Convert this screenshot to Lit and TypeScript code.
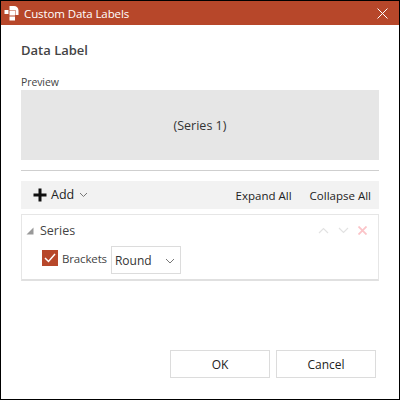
import { LitElement, html, css } from "lit";
import { customElement } from "lit/decorators.js";

@customElement("app-root")
export class AppRoot extends LitElement {
  static styles = css`
    :host { display: block; width: 400px; height: 400px; box-sizing: border-box; border: 1px solid #000; background: #fff; font-family: "Open Sans", "Noto Sans", sans-serif; font-size: 12px; color: #333; overflow: hidden; }
    .win { display: flex; flex-direction: column; height: 100%; }
    .title { height: 24px; flex: none; background: #b7472a; color: #fff; display: flex; align-items: center; padding: 0 11px 0 3px; gap: 4px; font-size: 11.5px; }
    .title .t { flex: 1; letter-spacing: -0.1px; }
    .title svg { display: block; }
    .body { flex: 1; display: flex; flex-direction: column; padding: 0 20px 21px; }
    h1 { margin: 16px 0 0; font-size: 13px; line-height: 18px; font-weight: 600; color: #444; }
    .plabel { margin-top: 16px; font-size: 10.5px; line-height: 14px; color: #444; letter-spacing: -0.1px; }
    .preview { margin-top: 1px; height: 70px; background: #e6e6e6; display: flex; align-items: center; justify-content: center; font-size: 12.5px; color: #333; flex: none; }
    .sep { margin-top: 10px; height: 1px; background: #cfcfcf; flex: none; }
    .toolbar { margin-top: 10px; height: 28px; background: #f2f2f2; display: flex; align-items: center; padding: 0 8px 0 12px; color: #222; font-size: 11.5px; flex: none; }
    .add { display: flex; align-items: center; gap: 4px; flex: 1; }
    .add .lbl { color: #222; font-size: 12.5px; margin-right: 1px; margin-top: -1px; }
    .links { display: flex; gap: 18px; }
    .panel { margin-top: 5px; height: 67px; box-sizing: border-box; border: 1px solid #e6e6e6; border-bottom: 2px solid #e0e0e0; flex: none; display: flex; flex-direction: column; padding: 0 0 0 4px; }
    .head { display: flex; align-items: center; height: 31px; gap: 6px; padding-right: 11px; font-size: 12.5px; color: #444; }
    .head .name { flex: 1; }
    .acts { display: flex; align-items: center; gap: 9px; }
    .row { display: flex; align-items: center; padding-left: 16px; gap: 4px; }
    .check { width: 16px; height: 16px; background: #b7472a; display: flex; align-items: center; justify-content: center; flex: none; margin-top: -5px; }
    .rlabel { font-size: 11.5px; color: #444; letter-spacing: -0.15px; margin-top: -3px; }
    .select { width: 70px; height: 28px; box-sizing: border-box; border: 1px solid #dcdcdc; display: flex; align-items: center; justify-content: space-between; padding: 1px 5px 0 3px; font-size: 12px; color: #333; }
    .foot { margin-top: auto; display: flex; justify-content: flex-end; gap: 6px; padding-right: 3px; }
    .btn { width: 100px; height: 28px; box-sizing: border-box; border: 1px solid #dcdcdc; background: #fff; display: flex; align-items: center; justify-content: center; color: #222; font-size: 12px; }
    .btn.ok { font-weight: 500; }
  `;

  render() {
    return html`<div class="win">
      <div class="title">
        <svg width="16" height="16" viewBox="0 0 16 16" fill="#fff"><path d="M5.500 1H10A4.500 4.500 0 0 1 14.500 5.500V10H11.500V5H5.500z"/><rect x="0.500" y="5" width="4" height="4"/><rect x="5.500" y="5.500" width="5.500" height="5"/><rect x="5.500" y="11.500" width="5.500" height="4"/></svg>
        <span class="t">Custom Data Labels</span>
        <svg width="11" height="11" viewBox="0 0 11 11" stroke="#fff" stroke-width="1" fill="none"><path d="M.5.5l10 10M10.500.5l-10 10"/></svg>
      </div>
      <div class="body">
        <h1>Data Label</h1>
        <div class="plabel">Preview</div>
        <div class="preview">(Series 1)</div>
        <div class="sep"></div>
        <div class="toolbar">
          <div class="add">
            <svg width="14" height="14" viewBox="0 0 14 14" fill="#111"><path d="M5.500.5h3v5h5v3h-5v5h-3v-5H.5v-3h5z"/></svg>
            <span class="lbl">Add</span>
            <svg width="9" height="6" viewBox="0 0 9 6" fill="none" stroke="#777"><path d="M1 1l3.500 3.500L8 1"/></svg>
          </div>
          <div class="links"><span>Expand All</span><span>Collapse All</span></div>
        </div>
        <div class="panel">
          <div class="head">
            <svg width="8" height="8" viewBox="0 0 8 8" fill="#999"><path d="M7.500.5v7H.5z"/></svg>
            <span class="name">Series</span>
            <div class="acts">
              <svg width="11" height="7" viewBox="0 0 11 7" fill="none" stroke="#e2e2e2" stroke-width="1.200"><path d="M1 6l4.500-4.500L10 6"/></svg>
              <svg width="11" height="7" viewBox="0 0 11 7" fill="none" stroke="#e2e2e2" stroke-width="1.200"><path d="M1 1l4.500 4.500L10 1"/></svg>
              <svg width="9" height="9" viewBox="0 0 9 9" fill="none" stroke="#fbc4c8" stroke-width="1.800"><path d="M.5.5l8 8M8.500.5l-8 8"/></svg>
            </div>
          </div>
          <div class="row">
            <span class="check"><svg width="12" height="10" viewBox="0 0 12 10" fill="none" stroke="#fff" stroke-width="1.500"><path d="M1 5l3.500 3.500L11 1"/></svg></span>
            <span class="rlabel">Brackets</span>
            <div class="select"><span>Round</span><svg width="10" height="6" viewBox="0 0 10 6" fill="none" stroke="#777"><path d="M1 1l4 4 4-4"/></svg></div>
          </div>
        </div>
        <div class="foot">
          <div class="btn ok">OK</div>
          <div class="btn">Cancel</div>
        </div>
      </div>
    </div>`;
  }
}
